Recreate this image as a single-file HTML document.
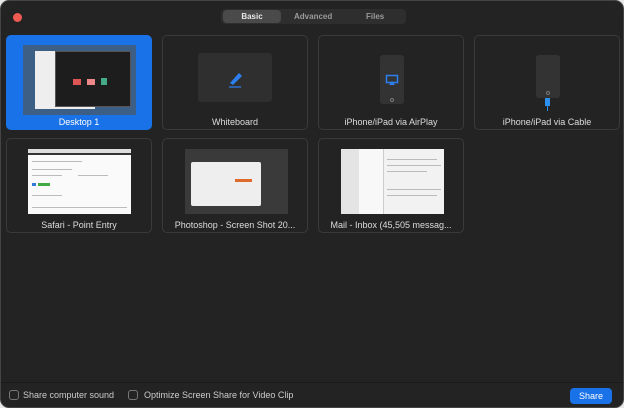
<!DOCTYPE html>
<html><head><style>
*{margin:0;padding:0;box-sizing:border-box}
body{width:624px;height:408px;background:#e8e8e8;font-family:"Liberation Sans",sans-serif;overflow:hidden}
.win{position:absolute;left:0;top:0;width:624px;height:408px;background:#232323;border-radius:9px;border:1px solid #444;overflow:hidden}
.dot{position:absolute;left:12px;top:12px;width:9px;height:9px;border-radius:50%;background:#ef5a52}
.tabs{position:absolute;left:220px;top:8px;width:185px;height:15px;background:#2e2e2e;border-radius:4px;font-size:8px;font-weight:bold;color:#9a9a9a}
.tabs span{position:absolute;top:3px}
.tabs .on{left:2px;top:1px;width:58px;height:13px;background:#4a4a4a;border-radius:4px;color:#e6e6e6;text-align:center;line-height:13px}
.tile{position:absolute;width:146px;height:95px;border:1px solid #3a3a3a;border-radius:5px}
.tile.sel{background:#1a72e8;border-color:#1a72e8}
.lbl{position:absolute;left:0;right:0;bottom:2px;text-align:center;font-size:9px;color:#ddd}
.sel .lbl{color:#fff}
.th{position:absolute;background:#fafafa;overflow:hidden}
.ln{position:absolute;height:1px;background:#bbb}
.bar{position:absolute;left:0;right:0;top:381px;height:1px;background:#1a1a1a}
.cb{position:absolute;top:389px;width:10px;height:10px;border:1px solid #777;border-radius:3px}
.bt{position:absolute;top:389px;font-size:9px;color:#ccc}
.share{position:absolute;left:569px;top:387px;width:42px;height:16px;background:#1a72e8;border-radius:4px;color:#fff;font-size:9px;text-align:center;line-height:16px}
</style></head><body><div class="win">
<div class="dot"></div>
<div class="tabs"><span class="on">Basic</span><span style="left:73px">Advanced</span><span style="left:145px">Files</span></div>

<div class="tile sel" style="left:5px;top:34px">
 <div class="th" style="left:16px;top:9px;width:113px;height:70px;background:#3d5f86">
  <div style="position:absolute;left:12px;top:6px;width:60px;height:58px;background:#eee"></div>
  <div style="position:absolute;left:32px;top:6px;width:76px;height:56px;background:#1d1d1d;border:1px solid #555"></div>
  <div style="position:absolute;left:50px;top:34px;width:8px;height:6px;background:#d55"></div>
  <div style="position:absolute;left:64px;top:34px;width:8px;height:6px;background:#e88"></div>
  <div style="position:absolute;left:78px;top:33px;width:6px;height:7px;background:#4a8"></div>
 </div>
 <div class="lbl">Desktop 1</div></div>

<div class="tile" style="left:161px;top:34px">
 <div style="position:absolute;left:35px;top:17px;width:74px;height:49px;background:#2f2f2f;border-radius:3px"></div>
 <svg style="position:absolute;left:64px;top:32px" width="18" height="20" viewBox="0 0 18 20"><path d="M3 15 L12 5 L15 8 L6 17 Z" fill="#2d7ff0"/><path d="M2 19 H14" stroke="#2d7ff0" stroke-width="1.2"/></svg>
 <div class="lbl">Whiteboard</div></div>

<div class="tile" style="left:317px;top:34px">
 <div style="position:absolute;left:61px;top:19px;width:24px;height:49px;background:#333;border-radius:3px"></div>
 <svg style="position:absolute;left:66px;top:38px" width="14" height="12" viewBox="0 0 14 12"><rect x="1.5" y="1.5" width="11" height="7" fill="none" stroke="#2d7ff0" stroke-width="1.5"/><path d="M4 11 L7 7 L10 11Z" fill="#2d7ff0"/></svg>
 <div style="position:absolute;left:71px;top:62px;width:4px;height:4px;border:1px solid #777;border-radius:50%"></div>
 <div class="lbl">iPhone/iPad via AirPlay</div></div>

<div class="tile" style="left:473px;top:34px">
 <div style="position:absolute;left:61px;top:19px;width:24px;height:43px;background:#333;border-radius:3px"></div>
 <div style="position:absolute;left:71px;top:55px;width:4px;height:4px;border:1px solid #777;border-radius:50%"></div>
 <div style="position:absolute;left:70px;top:62px;width:5px;height:8px;background:#2d8ff0"></div>
 <div style="position:absolute;left:72px;top:70px;width:1px;height:5px;background:#2d8ff0"></div>
 <div class="lbl">iPhone/iPad via Cable</div></div>

<div class="tile" style="left:5px;top:137px">
 <div class="th" style="left:21px;top:10px;width:103px;height:65px">
  <div style="height:4px;background:#ddd"></div><div style="height:2px;background:#333"></div>
  <div class="ln" style="left:4px;top:12px;width:50px"></div>
  <div class="ln" style="left:4px;top:20px;width:40px"></div>
  <div class="ln" style="left:4px;top:26px;width:30px"></div>
  <div class="ln" style="left:50px;top:26px;width:30px"></div>
  <div style="position:absolute;left:4px;top:34px;width:4px;height:3px;background:#3478d8"></div>
  <div style="position:absolute;left:10px;top:34px;width:12px;height:3px;background:#4a4"></div>
  <div class="ln" style="left:4px;top:46px;width:30px"></div>
  <div class="ln" style="left:4px;top:58px;width:95px"></div>
 </div>
 <div class="lbl">Safari - Point Entry</div></div>

<div class="tile" style="left:161px;top:137px">
 <div class="th" style="left:22px;top:10px;width:103px;height:65px;background:#3a3a3a">
  <div style="position:absolute;left:6px;top:13px;width:70px;height:44px;background:#eee;border-radius:2px"></div>
  <div style="position:absolute;left:50px;top:30px;width:17px;height:3px;background:#e06a2a"></div>
 </div>
 <div class="lbl">Photoshop - Screen Shot 20...</div></div>

<div class="tile" style="left:317px;top:137px">
 <div class="th" style="left:22px;top:10px;width:103px;height:65px;background:#f2f2f2">
  <div style="position:absolute;left:0;top:0;width:18px;height:65px;background:#e4e4e4"></div>
  <div style="position:absolute;left:18px;top:0;width:25px;height:65px;background:#f8f8f8;border-right:1px solid #ccc"></div>
  <div class="ln" style="left:46px;top:10px;width:50px"></div>
  <div class="ln" style="left:46px;top:16px;width:54px"></div>
  <div class="ln" style="left:46px;top:22px;width:40px"></div>
  <div class="ln" style="left:46px;top:40px;width:54px"></div>
  <div class="ln" style="left:46px;top:46px;width:50px"></div>
 </div>
 <div class="lbl">Mail - Inbox (45,505 messag...</div></div>

<div class="bar"></div>
<div class="cb" style="left:8px"></div><div class="bt" style="left:22px">Share computer sound</div>
<div class="cb" style="left:127px"></div><div class="bt" style="left:143px">Optimize Screen Share for Video Clip</div>
<div class="share">Share</div>
</div></body></html>
